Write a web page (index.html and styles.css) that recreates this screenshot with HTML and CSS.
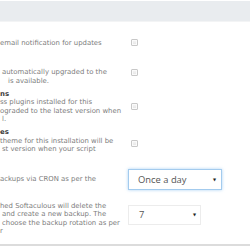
FILE: index.html
```html
<!DOCTYPE html>
<html lang="en">
<head>
    <meta charset="UTF-8">
    <title>Install Options</title>
    <link rel="stylesheet" href="styles.css">
</head>
<body>
    <div class="table-head"></div>
    <div class="settings">
        <div class="row">
            <div class="label">
                <span class="line"></span>
                <span class="line">email notification for updates</span>
                <span class="line"></span>
            </div>
            <div class="control"><span class="check"></span></div>
        </div>
        <div class="row">
            <div class="label">
                <span class="line"></span>
                <span class="line ind-s">automatically upgraded to the</span>
                <span class="line ind-l">is available.</span>
            </div>
            <div class="control"><span class="check"></span></div>
        </div>
        <div class="row">
            <div class="label">
                <span class="line title">ns</span>
                <span class="line">ss plugins installed for this</span>
                <span class="line">ograded to the latest version when</span>
                <span class="line ind-s">l.</span>
            </div>
            <div class="control"><span class="check"></span></div>
        </div>
        <div class="row">
            <div class="label">
                <span class="line title">es</span>
                <span class="line">theme for this installation will be</span>
                <span class="line ind-s">st version when your script</span>
                <span class="line"></span>
            </div>
            <div class="control"><span class="check check-up"></span></div>
        </div>
        <div class="row">
            <div class="label">
                <span class="line"></span>
                <span class="line">ackups via CRON as per the</span>
                <span class="line"></span>
            </div>
            <div class="control">
                <div class="select select-focus">
                    <span>Once a day</span>
                    <span class="arrow">▼</span>
                </div>
            </div>
        </div>
        <div class="row row-last">
            <div class="label">
                <span class="line"></span>
                <span class="line">hed Softaculous will delete the</span>
                <span class="line ind-s">and create a new backup. The</span>
                <span class="line ind-s">choose the backup rotation as per</span>
                <span class="line">r</span>
            </div>
            <div class="control">
                <div class="select select-small">
                    <span>7</span>
                    <span class="arrow">▼</span>
                </div>
            </div>
        </div>
    </div>
    <div class="table-foot"></div>
</body>
</html>
```

FILE: styles.css
```css
* {
    margin: 0;
    padding: 0;
    box-sizing: border-box;
}

body {
    background: #fff;
    width: 250px;
    height: 250px;
    overflow: hidden;
    padding-top: 1px;
}

.table-head {
    height: 21px;
    background: #e9ecef;
    border-bottom: 1px solid #f3f4f5;
}

.settings {
    margin-top: 6px;
}

.row {
    display: grid;
    grid-template-columns: 128px 1fr;
    align-items: center;
    padding: 2px 0;
}

.label {
    font-family: 'DejaVu Sans', Verdana, sans-serif;
    font-size: 6.9px;
    line-height: 8.6px;
    color: #7c7c7c;
    white-space: nowrap;
    overflow: hidden;
}

.line {
    display: block;
    min-height: 8.6px;
}

.line.title {
    font-weight: 700;
    color: #3a3a3a;
}

.ind-s {
    padding-left: 2px;
}

.ind-l {
    padding-left: 8px;
}

.control {
    display: flex;
    align-items: center;
}

.check {
    display: block;
    width: 7px;
    height: 7px;
    margin-left: 3px;
    border: 1px solid #c8c8c8;
    border-radius: 1px;
    background: linear-gradient(#f6f6f6, #e4e4e4);
    box-shadow: inset 0 0 0 1px #fafafa;
}

.check-up {
    margin-top: -3px;
}

.select {
    display: flex;
    align-items: center;
    justify-content: space-between;
    height: 21px;
    background: #fff;
    font-family: 'Open Sans', sans-serif;
    font-size: 9.4px;
    color: #555;
}

.select-focus {
    width: 94px;
    padding: 0 5px 0 9px;
    border: 1px solid #a3cbee;
    box-shadow: 0 0 3px rgba(102, 175, 233, 0.55);
}

.select-small {
    width: 73px;
    height: 20px;
    padding: 0 4px 0 10px;
    border: 1px solid #ececec;
}

.arrow {
    font-family: 'DejaVu Sans', sans-serif;
    font-size: 4px;
    color: #222;
}

.row-last {
    margin-top: -3px;
}

.table-foot {
    margin-top: 6px;
    border-top: 2px solid #dcdcdc;
}
```
